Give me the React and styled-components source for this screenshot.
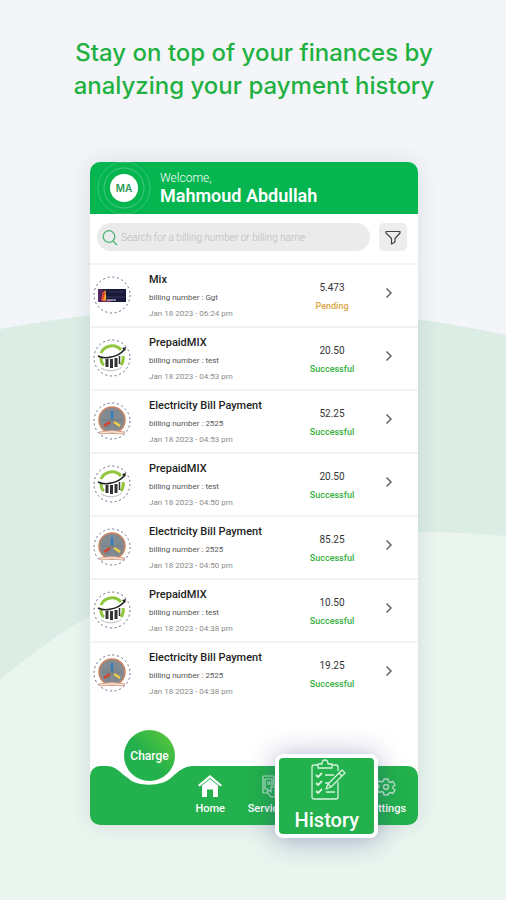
import React from 'react';
import styled, { createGlobalStyle } from 'styled-components';

const GlobalStyle = createGlobalStyle`
  * {
    box-sizing: border-box;
  }

  body {
    margin: 0;
    background-color: #f3f5f8;
    font-family: Roboto, 'Liberation Sans', sans-serif;
  }
`;

const Page = styled.main`
  position: relative;
  min-height: 100vh;
  padding: 36px 88px 75px 90px;
  overflow: hidden;
`;

const Backdrop = styled.svg`
  position: absolute;
  top: 0;
  left: 0;
  width: 100%;
  height: 100%;
  z-index: -1;
`;

const Headline = styled.h1`
  margin: 0 -60px 60px;
  color: #1fb141;
  font-family: Inter, sans-serif;
  font-size: 24px;
  font-weight: 500;
  line-height: 33px;
  text-align: center;
`;

const Phone = styled.section`
  background-color: #fff;
  border-radius: 10px;
  box-shadow: 0 0 20px rgba(60, 80, 100, 0.14);
`;

const Header = styled.header`
  display: flex;
  align-items: center;
  height: 52px;
  background-color: #04b550;
  border-radius: 10px 10px 0 0;
  color: #fff;
`;

const Avatar = styled.svg`
  flex: none;
  width: 70px;
  height: 52px;
`;

const Welcome = styled.div`
  font-size: 12px;
  font-weight: 300;
  line-height: 16px;
`;

const UserName = styled.div`
  font-size: 18px;
  font-weight: 600;
  line-height: 20px;
`;

const SearchBar = styled.form`
  display: flex;
  gap: 9px;
  padding: 9px 11px 12px 7px;
`;

const SearchField = styled.label`
  display: flex;
  flex: 1;
  align-items: center;
  gap: 3px;
  height: 28px;
  padding: 0 6px 0 4px;
  background-color: #ebebeb;
  border-radius: 14px;
`;

const SearchInput = styled.input`
  flex: 1;
  min-width: 0;
  padding: 0;
  border: 0;
  background: none;
  font-family: Roboto, sans-serif;
  font-size: 10px;
  font-weight: 300;

  &::placeholder {
    color: #b9b9b9;
    opacity: 1;
  }
`;

const FilterButton = styled.button`
  display: flex;
  align-items: center;
  justify-content: center;
  width: 28px;
  height: 28px;
  padding: 0;
  border: 0;
  border-radius: 5px;
  background-color: #ededed;
`;

const List = styled.ul`
  margin: 0;
  padding: 0;
  list-style: none;
`;

const Row = styled.li`
  display: grid;
  grid-template-columns: 56px 1fr 80px 34px;
  height: 63px;
  padding: 0 12px 0 3px;
  border-top: 2px solid #f1f3f5;
`;

const Logo = styled.svg`
  width: 38px;
  height: 38px;
  margin-top: 11px;
`;

const Info = styled.div`
  padding-top: 7px;
`;

const Title = styled.div`
  color: #1d1d1d;
  font-size: 11px;
  font-weight: 500;
  line-height: 16px;
  white-space: nowrap;
`;

const Billing = styled.div`
  margin-top: 2px;
  color: #555;
  font-size: 8px;
  line-height: 16px;
`;

const DateText = styled.div`
  color: #8a8a8a;
  font-size: 8px;
  line-height: 16px;
`;

const Result = styled.div`
  padding-top: 13px;
  text-align: center;
`;

const Amount = styled.div`
  color: #333;
  font-size: 10px;
  line-height: 19px;
`;

const Status = styled.div`
  color: ${({ $pending }) => ($pending ? '#d9a441' : '#35b03c')};
  font-size: 9px;
  font-weight: 500;
  line-height: 19px;
`;

const OpenButton = styled.button`
  display: flex;
  align-items: center;
  justify-content: center;
  height: 56px;
  padding: 0;
  border: 0;
  background: none;
`;

const Nav = styled.nav`
  position: relative;
  display: grid;
  grid-template-columns: 91px repeat(4, 1fr);
  height: 59px;
  margin-top: 62px;
  padding-right: 3px;
  background-color: #22b14c;
  border-radius: 10px;
`;

const Notch = styled.svg`
  position: absolute;
  top: 0;
  left: 16px;
  width: 88px;
  height: 20px;
`;

const ChargeButton = styled.button`
  position: absolute;
  top: -36px;
  left: 34px;
  width: 51px;
  height: 51px;
  padding: 0;
  border: 0;
  border-radius: 50%;
  background: linear-gradient(45deg, #22b14c 45%, #62c83a);
  color: #fff;
  font-family: Roboto, sans-serif;
  font-size: 12px;
  font-weight: 500;
`;

const NavLink = styled.a`
  display: flex;
  flex-direction: column;
  align-items: center;
  gap: 4px;
  padding-top: 8px;
  grid-column: ${({ $column }) => $column};
  color: #fff;
  font-size: 11px;
  font-weight: 500;
  line-height: 14px;
  text-decoration: none;
`;

const HistorySlot = styled.div`
  position: relative;
`;

const HistoryCard = styled.a`
  position: absolute;
  top: -12px;
  left: 50%;
  z-index: 1;
  display: flex;
  flex-direction: column;
  align-items: center;
  gap: 2px;
  width: 103px;
  height: 84px;
  margin-left: -52px;
  border: 4px solid #fff;
  border-radius: 8px;
  background-color: #22b14c;
  box-shadow: 0 2px 28px rgba(50, 50, 130, 0.4);
  color: #fff;
  font-size: 20px;
  font-weight: 500;
  line-height: 24px;
  text-decoration: none;
`;

const DashedRing = () => (
  <circle cx="19" cy="19" r="18" fill="none" stroke="#666a8c" strokeWidth="1" strokeDasharray="2 2.7" />
);

const MixLogo = () => (
  <Logo viewBox="0 0 38 38" aria-hidden="true">
    <DashedRing />
    <rect x="5" y="13" width="28" height="13" fill="#171a3a" />
    <path d="M5 13h5v13H5z" fill="#53265d" />
    <path d="M9 25c0-5 1-10 4-11-1 3 1 6 0 11z" fill="#f0a02c" />
    <path d="M8 24l2-9 2 2-2 8z" fill="#e2452f" />
    <path d="M14 21h18M15 16h16" stroke="#40365f" strokeWidth="1" />
    <path d="M10 25h8" stroke="#c84878" strokeWidth="1" />
    <path d="M14 24h9" stroke="#e8e4ee" strokeWidth="1" />
  </Logo>
);

const PrepaidLogo = () => (
  <Logo viewBox="0 0 38 38" aria-hidden="true">
    <DashedRing />
    <path d="M8 14a12 12 0 0 1 20-3" fill="none" stroke="#8fc63d" strokeWidth="3" />
    <path d="M8 19q0 5 3 7M30 17q1 5-2 9" fill="none" stroke="#8fc63d" strokeWidth="3" />
    <path d="M5 17q6 3 13 1 8-1 14-8" fill="none" stroke="#222" strokeWidth="1.6" />
    <path d="M29 9l4-1-1 4z" fill="#222" />
    <path d="M14 20v8M18.5 20v9M23 19v9" stroke="#333" strokeWidth="3" />
    <path d="M26.5 17v8" stroke="#333" strokeWidth="1.5" />
    <path d="M8 29q11 6 21-1" fill="none" stroke="#999" strokeWidth="1" strokeDasharray="1.5 .7" />
  </Logo>
);

const ElectricityLogo = () => (
  <Logo viewBox="0 0 38 38" aria-hidden="true">
    <DashedRing />
    <circle cx="19" cy="18" r="13" fill="#838b92" stroke="#c9835f" strokeWidth="1.5" />
    <path d="M19 17l-5 10M19 17l5 10M9 18h20" stroke="#737b83" strokeWidth="1" />
    <path d="M19 9v8" stroke="#2f7fc0" strokeWidth="2.4" />
    <path d="M17 20l-6 4" stroke="#d8412f" strokeWidth="2.4" />
    <path d="M21 20l6 4" stroke="#f0cf45" strokeWidth="2.4" />
    <path d="M6 30q13-3 26 0l-2 2q-11-2-22 0z" fill="#f4e4dc" stroke="#d39274" strokeWidth=".8" />
  </Logo>
);

const logos = {
  mix: MixLogo,
  prepaid: PrepaidLogo,
  electricity: ElectricityLogo,
};

const payments = [
  { id: 1, logo: 'mix', title: 'Mix', billing: 'Ggt', date: 'Jan 18 2023 - 06:24 pm', amount: '5.473', status: 'Pending' },
  { id: 2, logo: 'prepaid', title: 'PrepaidMIX', billing: 'test', date: 'Jan 18 2023 - 04:53 pm', amount: '20.50', status: 'Successful' },
  { id: 3, logo: 'electricity', title: 'Electricity Bill Payment', billing: '2525', date: 'Jan 18 2023 - 04:53 pm', amount: '52.25', status: 'Successful' },
  { id: 4, logo: 'prepaid', title: 'PrepaidMIX', billing: 'test', date: 'Jan 18 2023 - 04:50 pm', amount: '20.50', status: 'Successful' },
  { id: 5, logo: 'electricity', title: 'Electricity Bill Payment', billing: '2525', date: 'Jan 18 2023 - 04:50 pm', amount: '85.25', status: 'Successful' },
  { id: 6, logo: 'prepaid', title: 'PrepaidMIX', billing: 'test', date: 'Jan 18 2023 - 04:38 pm', amount: '10.50', status: 'Successful' },
  { id: 7, logo: 'electricity', title: 'Electricity Bill Payment', billing: '2525', date: 'Jan 18 2023 - 04:38 pm', amount: '19.25', status: 'Successful' },
];

const PaymentRow = ({ logo, title, billing, date, amount, status }) => {
  const PaymentLogo = logos[logo];
  return (
    <Row>
      <PaymentLogo />
      <Info>
        <Title>{title}</Title>
        <Billing>billing number : {billing}</Billing>
        <DateText>{date}</DateText>
      </Info>
      <Result>
        <Amount>{amount}</Amount>
        <Status $pending={status === 'Pending'}>{status}</Status>
      </Result>
      <OpenButton type="button" aria-label={`Open ${title}`}>
        <svg width="8" height="12" viewBox="0 0 8 12" fill="none" stroke="#666" strokeWidth="1.5">
          <path d="M1.5 1.5L6 6l-4.5 4.5" />
        </svg>
      </OpenButton>
    </Row>
  );
};

const App = () => (
  <Page>
    <GlobalStyle />
    <Backdrop viewBox="0 0 506 900" preserveAspectRatio="none" aria-hidden="true">
      <path d="M0 329Q253 281 506 335V900H0z" fill="#dbede5" />
      <path d="M0 680Q200 508 506 536V900H0z" fill="#eaf5ef" />
    </Backdrop>
    <Headline>
      Stay on top of your finances by
      <br />
      analyzing your payment history
    </Headline>
    <Phone>
      <Header>
        <Avatar viewBox="0 0 70 52" role="img" aria-label="MA">
          <circle cx="34" cy="26" r="26" fill="none" stroke="#3fc878" strokeWidth=".8" />
          <circle cx="34" cy="26" r="20" fill="none" stroke="#5bd08b" strokeWidth=".8" />
          <circle cx="34" cy="26" r="14" fill="#fff" />
          <text x="34" y="30" textAnchor="middle" fontFamily="Inter" fontSize="10" fontWeight="600" fill="#2b9a55">MA</text>
        </Avatar>
        <div>
          <Welcome>Welcome,</Welcome>
          <UserName>Mahmoud Abdullah</UserName>
        </div>
      </Header>
      <SearchBar>
        <SearchField>
          <svg width="17" height="17" viewBox="0 0 17 17" fill="none" stroke="#4cb573" strokeWidth="1.3">
            <circle cx="8" cy="7.5" r="5.8" />
            <path d="M12 12l4 4" />
          </svg>
          <SearchInput type="search" aria-label="Search" placeholder="Search for a billing number or billing name" />
        </SearchField>
        <FilterButton type="button" aria-label="Filter">
          <svg width="16" height="15" viewBox="0 0 16 15" fill="none" stroke="#444" strokeWidth="1.2" strokeLinejoin="round">
            <path d="M1 1.5h14v1.5L10 8.5V12l-3.5 2V8.5L1 3z" />
          </svg>
        </FilterButton>
      </SearchBar>
      <List>
        {payments.map((payment) => (
          <PaymentRow key={payment.id} {...payment} />
        ))}
      </List>
      <Nav>
        <Notch viewBox="0 0 88 20" aria-hidden="true">
          <path d="M0 0C11 0 15 8 22 12C30 21 57 21 66 11C72 6 77 0 88 0z" fill="#fff" />
        </Notch>
        <ChargeButton type="button">Charge</ChargeButton>
        <NavLink href="#home" $column={2}>
          <svg width="24" height="24" viewBox="0 0 24 24" fill="#fff">
            <path d="M12 1L0 11l1.5 1.5L12 4l10.5 8.5L24 11z" />
            <path d="M12 5L4 11.5V23h5v-7.5h6V23h5V11.5z" />
          </svg>
          Home
        </NavLink>
        <NavLink href="#services" $column={3}>
          <svg width="24" height="24" viewBox="0 0 24 24" fill="none" stroke="#b5e6c4" strokeWidth="1.2">
            <path d="M11 19H7q-1 0-1-1V3q0-1 1-1h9q1 0 1 1v8" />
            <path d="M8 5h7v7M8 5v10h3M10 8h3M10 10h3v-2" />
            <path d="M18 10v13h-4l-4-5 1-2 3 2v-5h4" />
          </svg>
          Services
        </NavLink>
        <HistorySlot>
          <HistoryCard href="#history" aria-current="page">
            <svg width="38" height="48" viewBox="0 0 38 48" fill="none" stroke="#d5f2dd" strokeWidth="1.3" strokeLinejoin="round">
              <path d="M10 7H6q-2 0-2 2v30q0 2 2 2h22q2 0 2-2V24M24 7h4q2 0 2 2v4" />
              <path d="M10 10V6h4q0-4 3-4t3 4h4v4z" />
              <path d="M8 17l2 2 4-4M8 25l2 2 4-4M8 33l2 2 4-4" strokeWidth="1.8" />
              <path d="M17 17h9M17 25h4M18 34h9" />
              <path d="M34 12l3 3-14 14-5 2 2-5z" />
              <path d="M31 15l3 3M20 26l3 3" />
            </svg>
            History
          </HistoryCard>
        </HistorySlot>
        <NavLink href="#settings" $column={5}>
          <svg width="24" height="24" viewBox="0 0 24 24" fill="none" stroke="#b5e6c4" strokeWidth="1.4" strokeLinejoin="round">
            <circle cx="12" cy="13" r="2.5" />
            <path d="M10 5h4l.5 2.5 2 1 2.5-1 2 3.5-2 1.5v2l2 1.5-2 3.5-2.5-1-2 1L14 21h-4l-.5-2.5-2-1-2.5 1L3 15l2-1.5v-2L3 10l2-3 2.5 1 2-1z" />
          </svg>
          Settings
        </NavLink>
      </Nav>
    </Phone>
  </Page>
);

export default App;
